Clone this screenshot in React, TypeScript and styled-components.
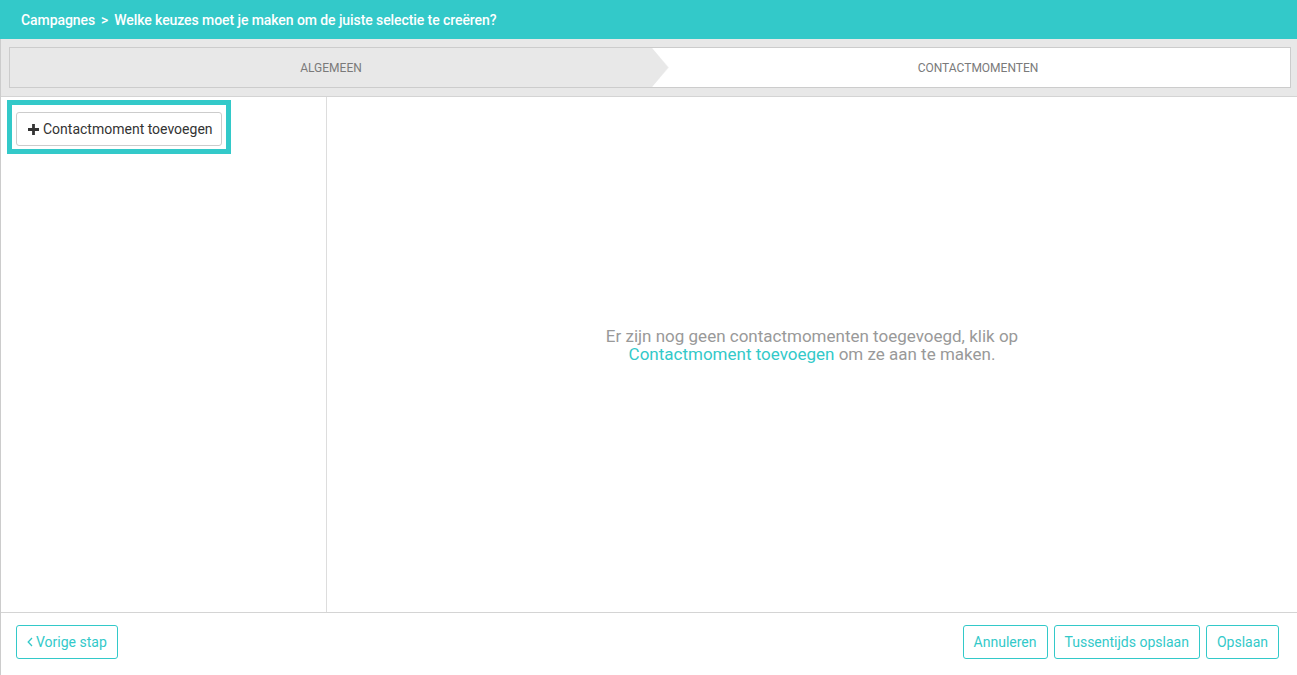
import React from "react";
import styled, { createGlobalStyle } from "styled-components";

const teal = "#33c9c9";

const GlobalStyle = createGlobalStyle`
  *, *::before, *::after {
    box-sizing: border-box;
  }
  html, body {
    margin: 0;
    padding: 0;
    background: #fff;
    font-family: Roboto, "Liberation Sans", Arial, sans-serif;
  }
`;

const Page = styled.div`
  display: flex;
  flex-direction: column;
  height: 675px;
  overflow: hidden;
`;

const Header = styled.div`
  height: 39px;
  flex: 0 0 39px;
  background: ${teal};
  color: #fff;
  display: flex;
  align-items: center;
  padding: 0 21px;
  font-size: 14px;
  font-weight: 500;
  letter-spacing: -0.08px;
  gap: 6px;
`;

const Crumb = styled.span`
  white-space: nowrap;
`;

const Body = styled.div`
  flex: 1;
  display: flex;
  flex-direction: column;
  border-left: 1px solid #cccccc;
  min-height: 0;
`;

const StepBar = styled.div`
  background: #e8e8e8;
  padding: 8px 6px 8px 8px;
  border-bottom: 1px solid #d4d4d4;
`;

const Stepper = styled.div`
  display: flex;
  height: 41px;
  border: 1px solid #cccccc;
  background: #fff;
`;

const Step = styled.div<{ $done?: boolean }>`
  flex: ${(p) => (p.$done ? "0 0 calc(50% + 2px)" : "1")};
  position: relative;
  display: flex;
  align-items: center;
  justify-content: center;
  font-size: 12px;
  color: #7a7a7a;
  text-transform: uppercase;
  background: ${(p) => (p.$done ? "#e8e8e8" : "#fff")};
  padding-left: ${(p) => (p.$done ? "0" : "14px")};

  ${(p) =>
    p.$done &&
    `
    &::before {
      content: "";
      position: absolute;
      top: 0;
      right: -17px;
      width: 17px;
      height: 100%;
      background: #f2f2f2;
      clip-path: polygon(0 0, 100% 50%, 0 100%);
      z-index: 1;
    }
    &::after {
      content: "";
      position: absolute;
      top: 0;
      right: -16px;
      width: 16px;
      height: 100%;
      background: #e8e8e8;
      clip-path: polygon(0 0, 100% 50%, 0 100%);
      z-index: 2;
    }
  `}
`;

const Main = styled.div`
  flex: 1;
  display: flex;
  border-bottom: 1px solid #d4d4d4;
  min-height: 0;
`;

const Sidebar = styled.div`
  width: 326px;
  flex: 0 0 326px;
  border-right: 1px solid #dddddd;
  padding: 3px 0 0 6px;
`;

const Highlight = styled.div`
  display: inline-block;
  border: 5px solid ${teal};
  padding: 7px 4px 3px;
`;

const AddButton = styled.button`
  display: flex;
  align-items: center;
  gap: 4px;
  height: 34px;
  padding: 0 8px 0 11px;
  background: #fff;
  border: 1px solid #cccccc;
  border-radius: 3px;
  font-family: Roboto, "Liberation Sans", Arial, sans-serif;
  font-size: 14px;
  color: #333;
  cursor: pointer;
`;

const Content = styled.div`
  flex: 1;
  display: flex;
  align-items: center;
  justify-content: center;
  padding-bottom: 20px;
`;

const EmptyText = styled.p`
  margin: 0;
  text-align: center;
  font-size: 17px;
  line-height: 18px;
  color: #999;
`;

const Link = styled.a`
  color: ${teal};
  text-decoration: none;
`;

const Footer = styled.div`
  flex: 0 0 62px;
  display: flex;
  justify-content: space-between;
  align-items: flex-start;
  padding: 12px 18px 0 15px;
`;

const ButtonGroup = styled.div`
  display: flex;
  gap: 6px;
`;

const OutlineButton = styled.button`
  display: flex;
  align-items: center;
  gap: 3px;
  height: 34px;
  padding: 0 10px;
  background: #fff;
  border: 1px solid ${teal};
  border-radius: 3px;
  font-family: Roboto, "Liberation Sans", Arial, sans-serif;
  font-size: 14px;
  color: ${teal};
  cursor: pointer;
`;

const PlusIcon = () => (
  <svg width="11" height="11" viewBox="0 0 11 11">
    <path d="M4.1 0h2.8v4.1H11v2.8H6.9V11H4.1V6.9H0V4.1h4.1z" fill="#333" />
  </svg>
);

const ChevronLeft = () => (
  <svg width="6" height="10" viewBox="0 0 6 10">
    <path d="M5 1L1.2 5 5 9" stroke={teal} strokeWidth="1.3" fill="none" />
  </svg>
);

const App: React.FC = () => (
  <Page>
    <GlobalStyle />
    <Header>
      <Crumb>Campagnes</Crumb>
      <Crumb>&gt;</Crumb>
      <Crumb>Welke keuzes moet je maken om de juiste selectie te creëren?</Crumb>
    </Header>
    <Body>
      <StepBar>
        <Stepper>
          <Step $done>Algemeen</Step>
          <Step>Contactmomenten</Step>
        </Stepper>
      </StepBar>
      <Main>
        <Sidebar>
          <Highlight>
            <AddButton>
              <PlusIcon />
              Contactmoment toevoegen
            </AddButton>
          </Highlight>
        </Sidebar>
        <Content>
          <EmptyText>
            Er zijn nog geen contactmomenten toegevoegd, klik op
            <br />
            <Link href="#">Contactmoment toevoegen</Link> om ze aan te maken.
          </EmptyText>
        </Content>
      </Main>
      <Footer>
        <OutlineButton>
          <ChevronLeft />
          Vorige stap
        </OutlineButton>
        <ButtonGroup>
          <OutlineButton>Annuleren</OutlineButton>
          <OutlineButton>Tussentijds opslaan</OutlineButton>
          <OutlineButton>Opslaan</OutlineButton>
        </ButtonGroup>
      </Footer>
    </Body>
  </Page>
);

export default App;
